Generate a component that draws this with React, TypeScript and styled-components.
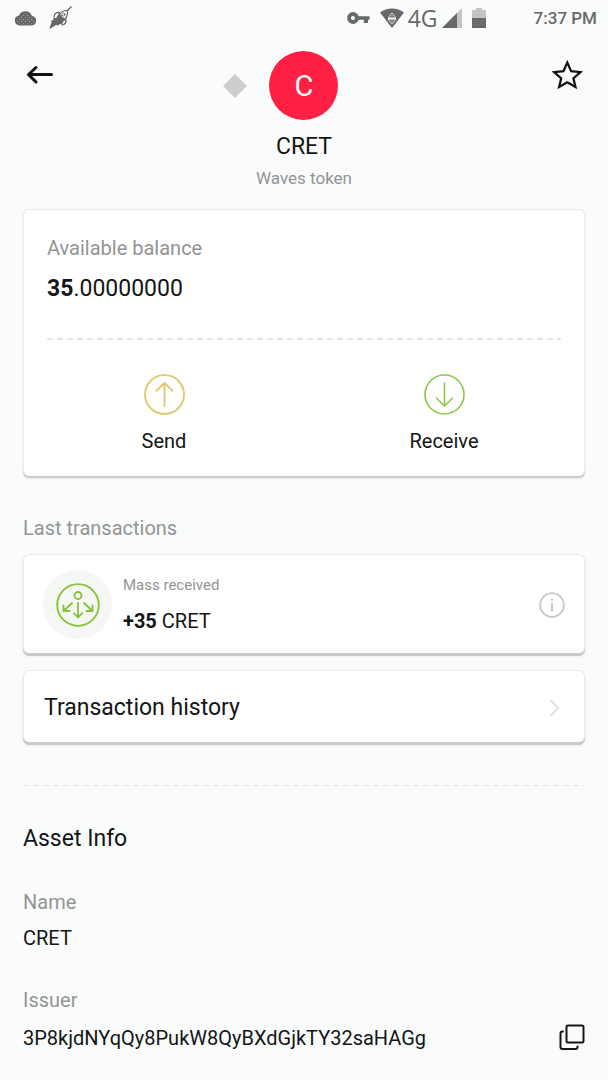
import React from "react";
import styled, { createGlobalStyle } from "styled-components";

const GlobalStyle = createGlobalStyle`
  * { box-sizing: border-box; }
  body {
    margin: 0;
    background: #fafcfc;
    color: #141516;
    font-family: Roboto, "Liberation Sans", sans-serif;
  }
  h1, h2, p, dl, dd, dt { margin: 0; font-weight: 400; }
  button {
    display: block;
    margin: 0;
    padding: 0;
    border: 0;
    background: none;
    color: inherit;
    font: inherit;
    cursor: pointer;
  }
  svg { display: block; flex: none; }
`;

const StatusBar = styled.div`
  display: flex;
  align-items: center;
  height: 35px;
  padding: 0 11px 0 14px;
  color: #666869;
`;

const StatusGroup = styled.div<{ $gap: number; $end?: boolean }>`
  display: flex;
  align-items: center;
  gap: ${(p) => p.$gap}px;
  margin-left: ${(p) => (p.$end ? "auto" : "0")};
`;

const Network = styled.span`
  display: flex;
  align-items: center;
  gap: 4px;
  font-family: "Open Sans", "Noto Sans", sans-serif;
  font-size: 23px;
  line-height: 28px;
  font-weight: 400;
`;

const Clock = styled.span`
  margin-left: 38px;
  font-size: 17px;
  line-height: 24px;
  font-weight: 500;
`;

const Header = styled.header`
  display: grid;
  grid-template-columns: 1fr auto 1fr;
  align-items: start;
  padding: 16px 24px 19px;
`;

const IconButton = styled.button<{ $end?: boolean }>`
  display: flex;
  justify-content: center;
  align-items: center;
  width: 32px;
  height: 48px;
  justify-self: ${(p) => (p.$end ? "end" : "start")};
`;

const Token = styled.div`
  display: flex;
  flex-direction: column;
  align-items: center;
`;

const AvatarRow = styled.div`
  position: relative;
  margin-bottom: 12px;
`;

const Avatar = styled.div`
  display: flex;
  align-items: center;
  justify-content: center;
  width: 69px;
  height: 69px;
  border-radius: 50%;
  background: #ff2043;
  color: #fff;
  font-size: 29px;
  line-height: 32px;
`;

const Diamond = styled.svg`
  position: absolute;
  top: 23px;
  right: 91px;
`;

const Title = styled.h1`
  font-size: 23px;
  line-height: 30px;
`;

const Subtitle = styled.p`
  margin-top: 4px;
  font-size: 17px;
  line-height: 24px;
  color: #929495;
`;

const Main = styled.main`
  padding: 0 23px 24px;
`;

const Card = styled.section`
  border: 1px solid #e9ebeb;
  border-bottom: 0;
  border-radius: 6px;
  background: #fff;
  box-shadow: 0 2px 0 #c9cbcb, 0 3px 2px rgba(0, 0, 0, 0.08);
`;

const RaisedCard = styled(Card)`
  box-shadow: 0 3px 0 #c9cbcb, 0 3px 3px rgba(0, 0, 0, 0.1);
`;

const BalanceArea = styled.div`
  padding: 24px 23px 0;
`;

const Label = styled.p`
  font-size: 20px;
  line-height: 28px;
  color: #929495;
`;

const Balance = styled.p`
  margin-top: 12px;
  font-size: 23px;
  line-height: 30px;
  b { font-weight: 700; }
`;

const Dashes = styled.div<{ $top: number; $weight: number }>`
  height: ${(p) => p.$weight}px;
  margin-top: ${(p) => p.$top}px;
  background: repeating-linear-gradient(90deg, #e4e6e6 0 6px, transparent 6px 10px);
`;

const Actions = styled.div`
  display: grid;
  grid-template-columns: 1fr 1fr;
  padding: 34px 0 21px;
`;

const Action = styled.button`
  display: flex;
  flex-direction: column;
  align-items: center;
  gap: 12px;
  font-size: 20px;
  line-height: 28px;
`;

const SectionLabel = styled.h2`
  margin: 38px 0 12px;
  font-size: 20px;
  line-height: 28px;
  color: #929495;
`;

const Transaction = styled.div`
  display: flex;
  align-items: center;
  padding: 15px 19px 14px;
`;

const Badge = styled.div`
  display: flex;
  align-items: center;
  justify-content: center;
  width: 69px;
  height: 69px;
  margin-right: 11px;
  border-radius: 50%;
  background: #f4f7f3;
`;

const TransactionText = styled.div`
  flex: 1;
`;

const Kind = styled.p`
  font-size: 15px;
  line-height: 20px;
  color: #929495;
`;

const Amount = styled.p`
  margin-top: 12px;
  font-size: 20px;
  line-height: 28px;
`;

const HistoryCard = styled(RaisedCard)`
  margin-top: 17px;
`;

const HistoryLink = styled.a`
  display: flex;
  align-items: center;
  justify-content: space-between;
  padding: 22px 24px 19px 20px;
  color: inherit;
  font-size: 23px;
  line-height: 30px;
  text-decoration: none;
`;

const InfoTitle = styled.h2`
  margin-top: 38px;
  font-size: 23px;
  line-height: 30px;
`;

const Field = styled.div<{ $gap: number }>`
  margin-top: 34px;
  dt {
    font-size: 20px;
    line-height: 28px;
    color: #929495;
  }
  dd {
    display: flex;
    align-items: flex-start;
    justify-content: space-between;
    margin-top: ${(p) => p.$gap}px;
    font-size: 20px;
    line-height: 28px;
  }
`;

const ArrowCircle = ({ color, down, weight }: { color: string; down?: boolean; weight: number }) => (
  <svg width="41" height="41" viewBox="0 0 41 41" fill="none" stroke={color} strokeWidth={weight} strokeLinecap="round" strokeLinejoin="round" aria-hidden="true">
    <circle cx="20.5" cy="20.5" r="19.5" />
    {down ? <path d="M20.5 9v23M12.5 24.2l8 7.8 8-7.8" /> : <path d="M20.5 32V9M12.5 16.8l8-7.8 8 7.8" />}
  </svg>
);

const CloudIcon = () => (
  <svg width="23" height="16" viewBox="0 0 23 16" aria-hidden="true">
    <defs>
      <pattern id="dots" width="4" height="4" patternUnits="userSpaceOnUse">
        <rect x="1" y="1" width="1" height="1" fill="#a4a6a7" />
        <rect x="3" y="3" width="1" height="1" fill="#a4a6a7" />
      </pattern>
    </defs>
    <path d="M5.5 15.5a5 5 0 0 1-.6-9.9A7 7 0 0 1 18 6a4.8 4.8 0 0 1 0 9.5z" fill="currentColor" />
    <path d="M5.5 13.5a3 3 0 0 1 .2-6A5.5 5.5 0 0 1 16.5 8a2.8 2.8 0 0 1 1.5 5.5z" fill="url(#dots)" />
  </svg>
);

const RocketIcon = () => (
  <svg width="23" height="23" viewBox="0 0 23 23" fill="none" stroke="currentColor" strokeWidth="1.2" strokeLinejoin="round" strokeLinecap="round" aria-hidden="true">
    <path d="M22 1l-3.5 3.5" strokeWidth="1.5" />
    <path d="M18.5 4.500c-4-.2-7 1.500-9 5.500l4.500 4.500c3.800-2.200 5-5.500 4.500-10z" />
    <path d="M9.500 10c0-1.500.3-2.500 1-3.500-2.500-.3-5 1-5.500 4.500M14 14.500c1.200 0 2-.3 3-1 .3 2.500-1 5-4 5.500" />
    <path d="M9 10l5 5-1.500 3-2-1-1 1.800-2.500-.6L1.200 22l2-5.500-.4-1.500 2.700-.6-.7-2 2.700.1z" fill="currentColor" />
    <path d="M9.500 10.500l1.500-2 2 1v1.500l1.500.5 1 1.500-2 2z" fill="currentColor" stroke="none" />
    <circle cx="14.500" cy="8.500" r="1.500" strokeWidth="1" />
  </svg>
);

const KeyIcon = () => (
  <svg width="23" height="12" viewBox="0 0 23 12" aria-hidden="true">
    <circle cx="6" cy="6" r="4" fill="none" stroke="currentColor" strokeWidth="3.8" />
    <path d="M10.5 4.2H22.5V7.8H21V11H16.8V7.8H10.5z" fill="currentColor" />
  </svg>
);

const WifiIcon = () => (
  <svg width="24" height="20" viewBox="0 0 24 20" aria-hidden="true">
    <path d="M0 4.5C7-.9 17-.9 24 4.5L12 20z" fill="currentColor" />
    <path d="M12 4.5l4 4.900v2.200L12 16.500l-4-4.900V9.400z" fill="#fafcfc" />
    <path d="M12 5.500l3.200 3.900H8.800zM8.800 11.600h6.400L12 15.500z" fill="currentColor" />
    <path d="M11.500 7.500h1v1h-1zM11.500 12.500h1v1h-1z" fill="#fafcfc" />
  </svg>
);

const SignalIcon = () => (
  <svg width="20" height="20" viewBox="0 0 20 20" aria-hidden="true">
    <path d="M20 0v20H0z" fill="#c2c4c5" />
    <path d="M15 5v15H0z" fill="currentColor" />
  </svg>
);

const BatteryIcon = () => (
  <svg width="14" height="20" viewBox="0 0 14 20" aria-hidden="true">
    <path d="M0 2h4V0h6v2h4v8H0z" fill="#c2c4c5" />
    <path d="M0 10h14v10H0z" fill="currentColor" />
    <path d="M2 12h1v1H2zM6 12h1v1H6zM10 12h1v1h-1zM4 14h1v1H4zM8 14h1v1H8zM2 16h1v1H2zM6 16h1v1H6zM10 16h1v1h-1z" fill="#858788" />
  </svg>
);

const BackIcon = () => (
  <svg width="28" height="20" viewBox="0 0 28 20" fill="none" stroke="#101112" strokeWidth="3" strokeLinecap="round" strokeLinejoin="round" aria-hidden="true">
    <path d="M25.5 9.5H2.5M10 2.5l-7.500 7 7.500 7.500" />
  </svg>
);

const StarIcon = () => (
  <svg width="32" height="30" viewBox="0 0 32 30" fill="none" stroke="#101112" strokeWidth="2.2" aria-hidden="true">
    <path d="M15.3 2.5l3.8 8.7 9.4.9-7.1 6.2 2.1 8.7-8.2-4.8L7.1 27l2.1-8.7-7.1-6.2 9.4-.9z" />
  </svg>
);

const MassReceivedIcon = () => (
  <svg width="44" height="44" viewBox="0 0 44 44" fill="none" stroke="#86c232" strokeWidth="1.8" strokeLinecap="round" strokeLinejoin="round" aria-hidden="true">
    <circle cx="22" cy="22" r="20.8" />
    <circle cx="22" cy="12.5" r="3.5" />
    <path d="M22 20v14M18 30.3l4 4 4-4" />
    <path d="M16 20l-8.500 8M7.500 22.500V28h6" />
    <path d="M28 20l8.500 8M36.500 22.500V28h-6" />
  </svg>
);

const InfoIcon = () => (
  <svg width="26" height="26" viewBox="0 0 26 26" fill="none" stroke="#c6c8c8" strokeWidth="1.8" aria-hidden="true">
    <circle cx="13" cy="13" r="11.8" />
    <path d="M13 11v8.500M13 6.500v2" strokeWidth="2" />
  </svg>
);

const ChevronIcon = () => (
  <svg width="11" height="18" viewBox="0 0 11 18" fill="none" stroke="#dcdede" strokeWidth="1.8" aria-hidden="true">
    <path d="M1.5 1.2L9.300 9l-7.800 7.800" />
  </svg>
);

const CopyIcon = () => (
  <svg width="26" height="26" viewBox="0 0 26 26" fill="none" stroke="#141516" strokeWidth="2" strokeLinecap="round" aria-hidden="true">
    <rect x="7.5" y="1.5" width="17" height="17" rx="1.5" />
    <path d="M4 7.500H3.500a2 2 0 0 0-2 2V23a2 2 0 0 0 2 2H16.500a2 2 0 0 0 2-2v-.5" />
  </svg>
);

export default function App() {
  return (
    <>
      <GlobalStyle />
      <StatusBar>
        <StatusGroup $gap={12}>
          <CloudIcon />
          <RocketIcon />
        </StatusGroup>
        <StatusGroup $gap={10} $end>
          <KeyIcon />
          <Network>
            <WifiIcon />
            4G
            <SignalIcon />
          </Network>
          <BatteryIcon />
          <Clock>7:37 PM</Clock>
        </StatusGroup>
      </StatusBar>

      <Header>
        <IconButton aria-label="Back">
          <BackIcon />
        </IconButton>
        <Token>
          <AvatarRow>
            <Avatar>C</Avatar>
            <Diamond width="24" height="24" viewBox="0 0 24 24" aria-hidden="true">
              <path d="M12 0l12 12-12 12L0 12z" fill="#cbcdce" />
            </Diamond>
          </AvatarRow>
          <Title>CRET</Title>
          <Subtitle>Waves token</Subtitle>
        </Token>
        <IconButton aria-label="Favorite" $end>
          <StarIcon />
        </IconButton>
      </Header>

      <Main>
        <Card>
          <BalanceArea>
            <Label>Available balance</Label>
            <Balance>
              <b>35</b>.00000000
            </Balance>
            <Dashes $top={34} $weight={2} />
          </BalanceArea>
          <Actions>
            <Action>
              <ArrowCircle color="#dfcc78" weight={2} />
              Send
            </Action>
            <Action>
              <ArrowCircle color="#8fc748" weight={1.6} down />
              Receive
            </Action>
          </Actions>
        </Card>

        <SectionLabel>Last transactions</SectionLabel>
        <RaisedCard>
          <Transaction>
            <Badge>
              <MassReceivedIcon />
            </Badge>
            <TransactionText>
              <Kind>Mass received</Kind>
              <Amount>
                <b>+35</b> CRET
              </Amount>
            </TransactionText>
            <button aria-label="Details">
              <InfoIcon />
            </button>
          </Transaction>
        </RaisedCard>

        <HistoryCard>
          <HistoryLink href="#history">
            Transaction history
            <ChevronIcon />
          </HistoryLink>
        </HistoryCard>

        <Dashes $top={43} $weight={1} />

        <InfoTitle>Asset Info</InfoTitle>
        <dl>
          <Field $gap={8}>
            <dt>Name</dt>
            <dd>CRET</dd>
          </Field>
          <Field $gap={10}>
            <dt>Issuer</dt>
            <dd>
              3P8kjdNYqQy8PukW8QyBXdGjkTY32saHAGg
              <button aria-label="Copy issuer">
                <CopyIcon />
              </button>
            </dd>
          </Field>
        </dl>
      </Main>
    </>
  );
}
